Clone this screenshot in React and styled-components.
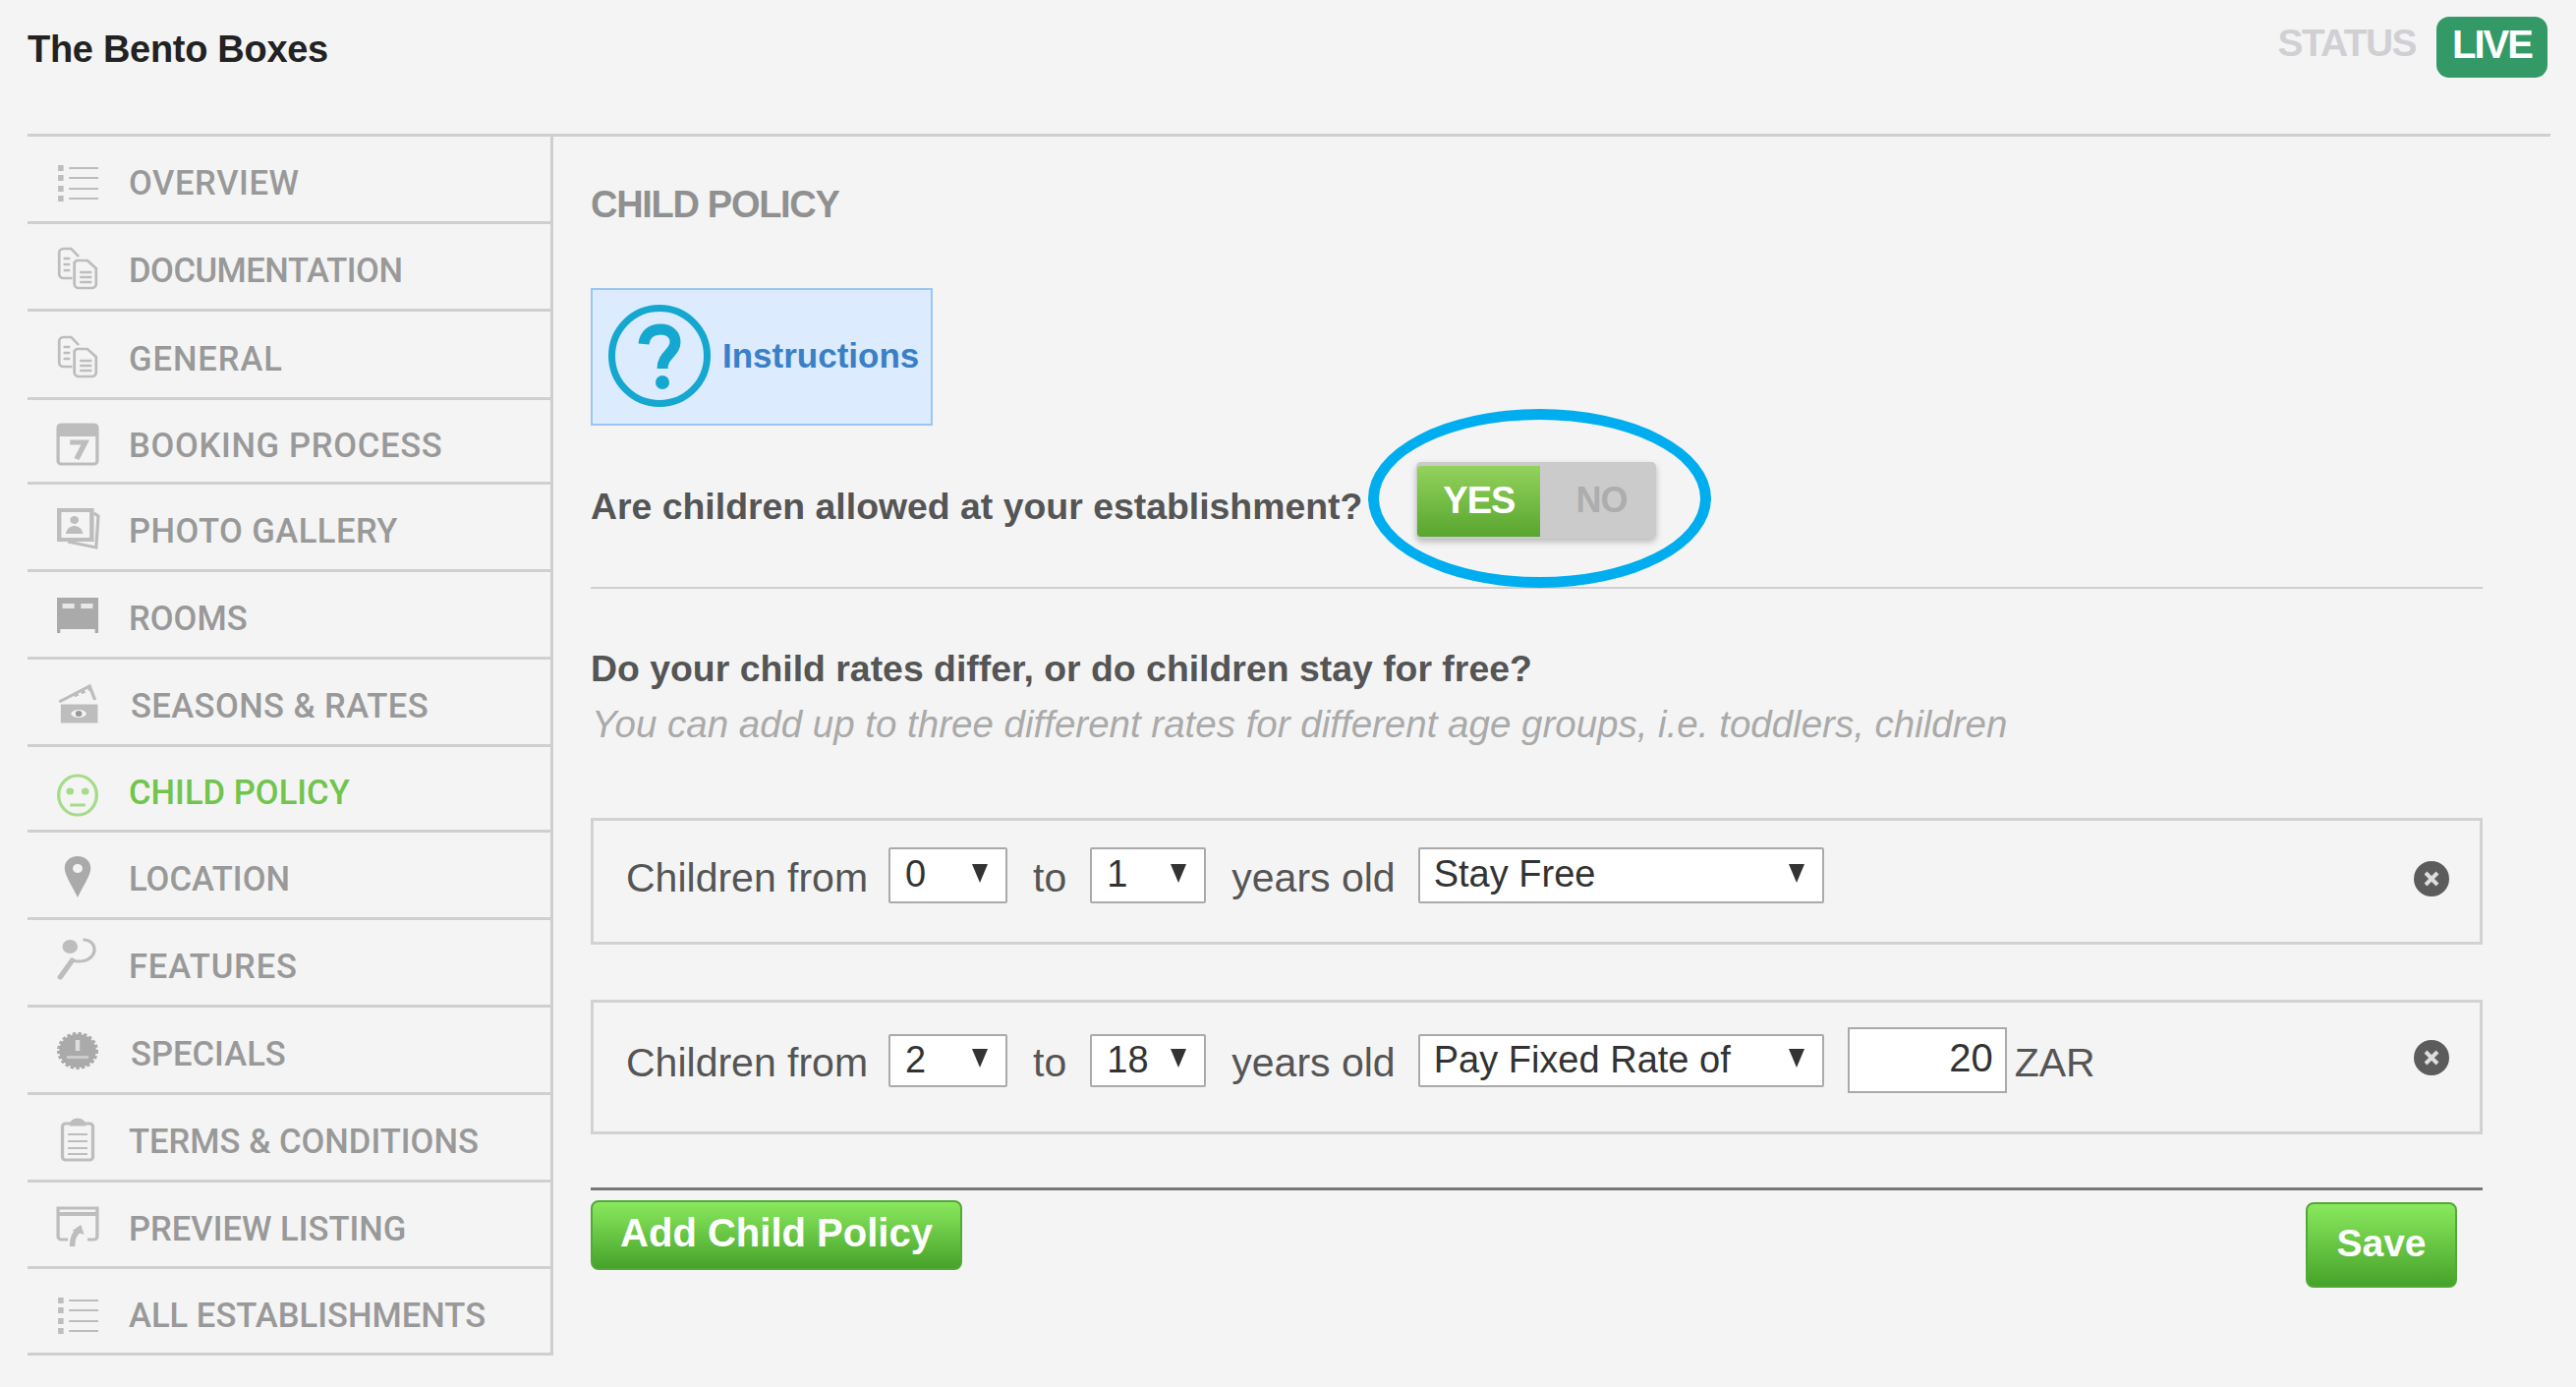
import React from "react";
import styled, { createGlobalStyle } from "styled-components";

const GlobalStyle = createGlobalStyle`
  html, body {
    margin: 0;
    background: #f4f4f4;
    font-family: "Liberation Sans", Arial, sans-serif;
  }
`;

const Page = styled.div`
  width: 2621px;
  min-height: 1411px;
  padding: 0 26px 0 28px;
  box-sizing: border-box;
  background: #f4f4f4;
`;

const Header = styled.header`
  height: 139px;
  box-sizing: border-box;
  padding: 17px 3px 0 0;
  border-bottom: 3px solid #cfcfcf;
  display: flex;
  justify-content: space-between;
  align-items: flex-start;
`;

const Title = styled.h1`
  margin: 12px 0 0;
  font-size: 38px;
  line-height: 42px;
  font-weight: 700;
  letter-spacing: -0.3px;
  color: #222;
`;

const StatusWrap = styled.div`
  display: flex;
  align-items: flex-start;
  gap: 21px;
`;

const StatusLabel = styled.span`
  margin-top: 5px;
  font-size: 39px;
  line-height: 44px;
  font-weight: 700;
  letter-spacing: -1.6px;
  color: #d0d0d4;
`;

const LiveBadge = styled.span`
  width: 113px;
  height: 62px;
  box-sizing: border-box;
  padding-top: 6px;
  text-align: center;
  border-radius: 13px;
  background: #339966;
  color: #fff;
  font-size: 40px;
  line-height: 44px;
  font-weight: 700;
  letter-spacing: -2px;
`;

const Main = styled.div`
  display: flex;
  align-items: flex-start;
`;

const Sidebar = styled.nav`
  width: 535px;
  flex: none;
  box-sizing: border-box;
  border-right: 3px solid #cfcfcf;
`;

const NavRow = styled.div`
  height: ${(p) => p.$h}px;
  box-sizing: border-box;
  padding: 8px 0 0 30px;
  border-bottom: 3px solid #cfcfcf;
  display: flex;
  align-items: center;
  color: ${(p) => (p.$active ? "#71c44d" : "#999")};
`;

const NavIcon = styled.svg`
  width: 42px;
  height: 44px;
  flex: none;
  margin-top: -4px;
  overflow: visible;
`;

const NavLabel = styled.span`
  margin-left: ${(p) => (p.$wide ? 33 : 31)}px;
  font-family: Roboto, "Liberation Sans", sans-serif;
  font-size: 34.6px;
  line-height: 40px;
  font-weight: 500;
  letter-spacing: ${(p) => p.$track || 0}px;
  white-space: nowrap;
`;

const Content = styled.main`
  width: 1963px;
  flex: none;
  box-sizing: border-box;
  padding: 48px 0 0 38px;
`;

const PageTitle = styled.h2`
  margin: 0;
  font-size: 38px;
  line-height: 42px;
  font-weight: 700;
  letter-spacing: -1.3px;
  color: #909090;
`;

const InstructionsBox = styled.div`
  margin-top: 64px;
  width: 348px;
  height: 140px;
  box-sizing: border-box;
  padding: 0 0 2px 16px;
  border: 2px solid #9cc6f0;
  background: #dcebfd;
  display: flex;
  align-items: center;
  gap: 12px;
`;

const InstructionsText = styled.span`
  font-size: 35px;
  font-weight: 700;
  color: #3a80c6;
`;

const AllowedRow = styled.div`
  height: 166px;
  box-sizing: border-box;
  padding-top: 37px;
  border-bottom: 2px solid #cfcfcf;
  display: flex;
  align-items: flex-start;
  gap: 55px;
`;

const Question = styled.p`
  margin: ${(p) => p.$top}px 0 0;
  font-size: 37.4px;
  line-height: 44px;
  font-weight: 700;
  color: #555;
  white-space: nowrap;
`;

const Toggle = styled.div`
  position: relative;
  width: 244px;
  height: 78px;
  box-sizing: border-box;
  padding: 4px 0 2px 1px;
  flex: none;
  background: #cbcbcb;
  border-radius: 5px;
  box-shadow: 0 3px 6px rgba(0, 0, 0, 0.25);
  display: flex;
`;

const ToggleOption = styled.span`
  width: ${(p) => (p.$on ? 125 : 118)}px;
  display: flex;
  align-items: center;
  justify-content: center;
  padding: 0 0 2px ${(p) => (p.$on ? 0 : 6)}px;
  box-sizing: border-box;
  border-radius: 4px 0 0 4px;
  background: ${(p) => (p.$on ? "linear-gradient(#92d35c, #58a52f)" : "transparent")};
  color: ${(p) => (p.$on ? "#fff" : "#adadad")};
  font-size: ${(p) => (p.$on ? 38 : 36)}px;
  font-weight: 700;
  letter-spacing: -1px;
`;

/* hand-drawn circle that highlights the toggle */
const Highlight = styled.span`
  position: absolute;
  left: -49px;
  right: -56px;
  top: -54px;
  bottom: -50px;
  border: 11px solid #00aeef;
  border-radius: 50%;
  pointer-events: none;
`;

const Hint = styled.p`
  margin: 13px 0 0 1px;
  font-size: 38.5px;
  line-height: 44px;
  font-style: italic;
  color: #aaa;
  white-space: nowrap;
`;

const PolicyPanel = styled.div`
  margin-top: ${(p) => p.$top}px;
  height: ${(p) => p.$h}px;
  box-sizing: border-box;
  padding: ${(p) => p.$pad}px 31px 0 33px;
  border: 3px solid #d2d2d2;
  display: flex;
  align-items: flex-start;
`;

const PolicyLine = styled.div`
  flex: 1;
  height: ${(p) => p.$h}px;
  display: flex;
  align-items: center;
  font-size: 41px;
  color: #555;
  white-space: nowrap;
`;

const Word = styled.span`
  margin: 5px ${(p) => p.$right}px 0 0;
`;

const SelectWrap = styled.span`
  position: relative;
  display: block;
  width: ${(p) => p.$w}px;
  height: ${(p) => p.$h}px;
  margin-right: ${(p) => p.$right}px;
`;

const Select = styled.select`
  appearance: none;
  width: 100%;
  height: 100%;
  box-sizing: border-box;
  padding: 0 0 ${(p) => p.$lift}px ${(p) => p.$inset}px;
  border: 2px solid #aaa;
  border-radius: 2px;
  background: #fff;
  font-family: "Liberation Sans", Arial, sans-serif;
  font-size: 38px;
  color: #333;
`;

const Arrow = styled.span`
  position: absolute;
  right: 20px;
  top: 50%;
  margin-top: -12px;
  border-left: 8px solid transparent;
  border-right: 8px solid transparent;
  border-top: 19px solid #333;
  pointer-events: none;
`;

const AmountInput = styled.input`
  width: 162px;
  height: 67px;
  box-sizing: border-box;
  padding: 0 12px 4px 0;
  margin: 0 8px 0 24px;
  border: 2px solid #aaa;
  background: #fff;
  text-align: right;
  font-family: "Liberation Sans", Arial, sans-serif;
  font-size: 40px;
  color: #333;
`;

const RemoveButton = styled.svg`
  width: 36px;
  height: 36px;
  flex: none;
  margin-top: ${(p) => p.$top}px;
`;

const Footer = styled.div`
  margin-top: 54px;
  padding-top: 10px;
  border-top: 3px solid #777;
  display: flex;
  justify-content: space-between;
  align-items: flex-start;
`;

const GreenButton = styled.button`
  width: ${(p) => p.$w}px;
  height: ${(p) => p.$h}px;
  margin: ${(p) => p.$top}px ${(p) => p.$right}px 0 0;
  padding: 0 0 4px;
  border: 2px solid #54a838;
  border-radius: 8px;
  background: linear-gradient(#8ae85e, #46a32a);
  color: #fff;
  font-family: "Liberation Sans", Arial, sans-serif;
  font-size: ${(p) => p.$size}px;
  font-weight: 700;
`;

const c = "#bdbdbd";

const icons = {
  list: (
    <g fill={c} transform="translate(0 3)">
      {[6, 16, 27, 37].map((y) => (
        <g key={y}>
          <rect x="1" y={y - 3} width="5" height="6" />
          <rect x="11" y={y - 1} width="27" height="2" />
        </g>
      ))}
    </g>
  ),
  docs: (
    <g fill="none" stroke={c} strokeWidth="2.5">
      <path d="M14 32H6a4 4 0 0 1-4-4V6a4 4 0 0 1 4-4h7l7 8" />
      <path d="M18 14h10l8 8v16a4 4 0 0 1-4 4H20a4 4 0 0 1-4-4V16z" fill="#f4f4f4" />
      <path d="M21 26h11M21 31h11M21 36h11M6 12h6M6 18h6M6 24h6" />
    </g>
  ),
  calendar: (
    <g>
      <rect x="1" y="3" width="36" height="40" rx="3" fill="none" stroke={c} strokeWidth="3" />
      <rect x="1" y="3" width="36" height="12" fill={c} />
      <path d="M12 21h14l-8 17" fill="none" stroke={c} strokeWidth="5" />
    </g>
  ),
  photo: (
    <g>
      <path d="M34 6l4 3-2 32-26-6" fill="none" stroke={c} strokeWidth="3" />
      <rect x="2" y="3" width="30" height="30" fill="#f4f4f4" stroke={c} strokeWidth="4" />
      <circle cx="16" cy="13" r="4" fill={c} />
      <path d="M8 27c1-6 5-8 8-8s7 2 8 8z" fill={c} />
    </g>
  ),
  bed: (
    <g fill="#aaa">
      <path d="M0 3h38v36h-3v-4H3v4H0z" />
      <rect x="5" y="9" width="11" height="5" fill="#e8e8e8" />
      <rect x="22" y="9" width="11" height="5" fill="#e8e8e8" />
    </g>
  ),
  money: (
    <g fill="none" stroke={c} strokeWidth="3">
      <path d="M2 20L30 4l5 14" />
      <path d="M16 14l14-7" strokeDasharray="4 3" />
      <rect x="5" y="24" width="31" height="16" fill={c} />
      <ellipse cx="20" cy="32" rx="7" ry="4" fill="#f4f4f4" stroke="none" />
      <circle cx="20" cy="32" r="3" fill="#999" stroke="none" />
    </g>
  ),
  smile: (
    <g fill="none" stroke="#a5dc8a" strokeWidth="3" transform="translate(0 5)">
      <ellipse cx="19" cy="22" rx="17.500" ry="20" />
      <circle cx="12" cy="18" r="2" fill="#a5dc8a" />
      <circle cx="26" cy="18" r="2" fill="#a5dc8a" />
      <path d="M12 32h14" />
    </g>
  ),
  pin: (
    <path
      fillRule="evenodd"
      fill="#aaa"
      d="M19 1c7 0 12 5 12 12 0 8-8 20-12 30C15 33 7 21 7 13 7 6 12 1 19 1zm0 8a4.500 4.500 0 1 0 0 9 4.500 4.500 0 0 0 0-9z"
    />
  ),
  features: (
    <g fill="none" stroke={c} transform="translate(0 -5)">
      <circle cx="12" cy="9" r="7" fill={c} stroke="none" />
      <path d="M24 2c10 0 13 10 8 17-4 5-12 6-18 4" strokeWidth="3" />
      <path d="M14 23L3 40" strokeWidth="5" strokeLinecap="round" />
    </g>
  ),
  specials: (
    <g>
      <circle cx="19" cy="21" r="17" fill="#aaa" stroke="#aaa" strokeWidth="4" strokeDasharray="3 2" />
      <rect x="17" y="10" width="4" height="11" fill="#ddd" />
      <rect x="9" y="26" width="20" height="3" fill="#ccc" />
    </g>
  ),
  clipboard: (
    <g fill="none" stroke={c} strokeWidth="3">
      <rect x="5" y="6" width="28" height="37" rx="3" />
      <path d="M13 7c0-3 3-5 6-5s6 2 6 5z" fill={c} />
      <path d="M10 17h18M10 24h18M10 31h18M10 37h18" strokeWidth="2" />
    </g>
  ),
  preview: (
    <g fill="none" stroke={c} strokeWidth="3" transform="translate(0 -1)">
      <path d="M10 36H4a3 3 0 0 1-3-3V4h36v29a3 3 0 0 1-3 3h-6" />
      <path d="M1 10h36" strokeWidth="4" />
      <path d="M14 43c0-8 2-14 7-17" strokeWidth="5" />
      <path d="M14 27l8-6 3 10z" fill={c} stroke="none" />
    </g>
  ),
};

const navItems = [
  { label: "OVERVIEW", icon: "list", h: 89, track: 0.6 },
  { label: "DOCUMENTATION", icon: "docs", h: 89, track: -0.5 },
  { label: "GENERAL", icon: "docs", h: 90, track: 0.9 },
  { label: "BOOKING PROCESS", icon: "calendar", h: 86, track: 0.66 },
  { label: "PHOTO GALLERY", icon: "photo", h: 89, track: 0.45 },
  { label: "ROOMS", icon: "bed", h: 89 },
  { label: "SEASONS & RATES", icon: "money", h: 89, wide: true, track: 0.4 },
  { label: "CHILD POLICY", icon: "smile", h: 87, active: true },
  { label: "LOCATION", icon: "pin", h: 89 },
  { label: "FEATURES", icon: "features", h: 89, track: 0.8 },
  { label: "SPECIALS", icon: "specials", h: 89, wide: true },
  { label: "TERMS & CONDITIONS", icon: "clipboard", h: 89 },
  { label: "PREVIEW LISTING", icon: "preview", h: 88 },
  { label: "ALL ESTABLISHMENTS", icon: "list", h: 88 },
];

function Dropdown({ w, h, right, value, options, inset, lift }) {
  return (
    <SelectWrap $w={w} $h={h} $right={right}>
      <Select defaultValue={value} $inset={inset} $lift={lift}>
        {options.map((o) => (
          <option key={o}>{o}</option>
        ))}
      </Select>
      <Arrow />
    </SelectWrap>
  );
}

function Remove({ top }) {
  return (
    <RemoveButton $top={top} viewBox="0 0 36 36">
      <circle cx="18" cy="18" r="18" fill="#5c5c5c" />
      <path d="M12 12l12 12M24 12L12 24" stroke="#ddd" strokeWidth="4" />
    </RemoveButton>
  );
}

function PolicyRow({ from, to, rate, amount, selectH, lineH, top, panelH, pad, removeTop, lift }) {
  const ages = ["0", "1", "2", "18"];
  return (
    <PolicyPanel $top={top} $h={panelH} $pad={pad}>
      <PolicyLine $h={lineH}>
        <Word $right={21}>Children from</Word>
        <Dropdown w={121} h={selectH} right={26} value={from} options={ages} inset={15} lift={lift} />
        <Word $right={24}>to</Word>
        <Dropdown w={118} h={selectH} right={26} value={to} options={ages} inset={15} lift={lift} />
        <Word $right={23}>years old</Word>
        <Dropdown
          w={413}
          h={selectH}
          right={0}
          value={rate}
          options={["Stay Free", "Pay Fixed Rate of"]}
          inset={14}
          lift={lift}
        />
        {amount && (
          <>
            <AmountInput defaultValue={amount} />
            <Word $right={0}>ZAR</Word>
          </>
        )}
      </PolicyLine>
      <Remove top={removeTop} />
    </PolicyPanel>
  );
}

export default function App() {
  return (
    <Page>
      <GlobalStyle />
      <Header>
        <Title>The Bento Boxes</Title>
        <StatusWrap>
          <StatusLabel>STATUS</StatusLabel>
          <LiveBadge>LIVE</LiveBadge>
        </StatusWrap>
      </Header>
      <Main>
        <Sidebar>
          {navItems.map((item) => (
            <NavRow key={item.label} $h={item.h} $active={item.active}>
              <NavIcon viewBox="0 0 38 44" preserveAspectRatio="none">
                {icons[item.icon]}
              </NavIcon>
              <NavLabel $wide={item.wide} $track={item.track}>
                {item.label}
              </NavLabel>
            </NavRow>
          ))}
        </Sidebar>
        <Content>
          <PageTitle>CHILD POLICY</PageTitle>
          <InstructionsBox>
            <svg width="104" height="104" viewBox="0 0 104 104">
              <circle cx="52" cy="52" r="48.500" fill="none" stroke="#14a7cf" strokeWidth="7" />
              <path
                d="M36 40c1-10 8-15 17-15 10 0 15 6 15 13 0 11-13 13-13 27"
                fill="none"
                stroke="#14a7cf"
                strokeWidth="11"
              />
              <circle cx="55" cy="79" r="7" fill="#14a7cf" />
            </svg>
            <InstructionsText>Instructions</InstructionsText>
          </InstructionsBox>
          <AllowedRow>
            <Question $top={23}>Are children allowed at your establishment?</Question>
            <Toggle>
              <ToggleOption $on>YES</ToggleOption>
              <ToggleOption>NO</ToggleOption>
              <Highlight />
            </Toggle>
          </AllowedRow>
          <Question $top={59}>Do your child rates differ, or do children stay for free?</Question>
          <Hint>You can add up to three different rates for different age groups, i.e. toddlers, children</Hint>
          <PolicyRow
            from="0"
            to="1"
            rate="Stay Free"
            selectH={57}
            lineH={57}
            top={73}
            panelH={129}
            pad={27}
            removeTop={14}
            lift={4}
          />
          <PolicyRow
            from="2"
            to="18"
            rate="Pay Fixed Rate of"
            amount="20"
            selectH={54}
            lineH={67}
            top={56}
            panelH={137}
            pad={25}
            removeTop={13}
            lift={1}
          />
          <Footer>
            <GreenButton $w={378} $h={71} $top={0} $right={0} $size={40}>
              Add Child Policy
            </GreenButton>
            <GreenButton $w={154} $h={87} $top={2} $right={26} $size={39}>
              Save
            </GreenButton>
          </Footer>
        </Content>
      </Main>
    </Page>
  );
}
